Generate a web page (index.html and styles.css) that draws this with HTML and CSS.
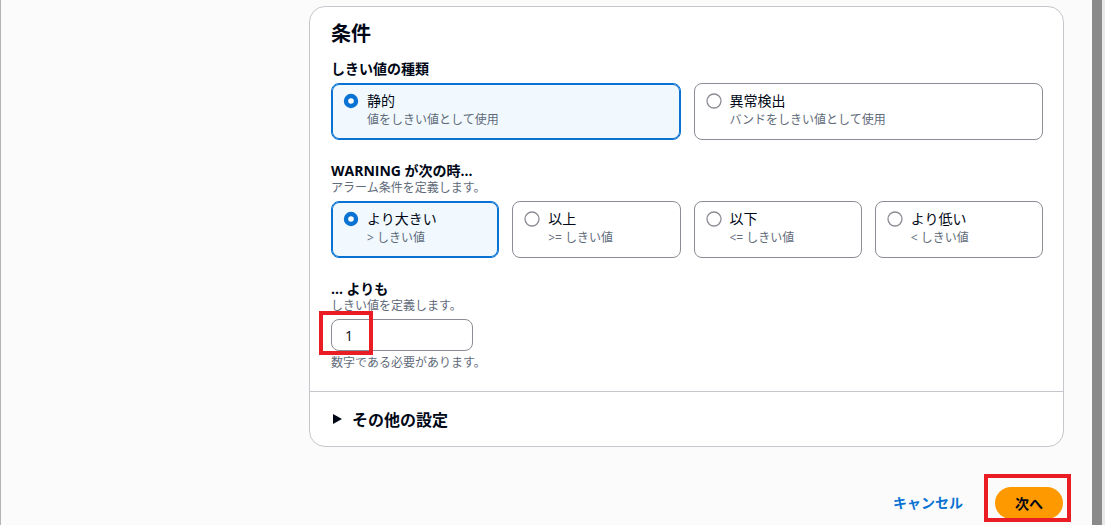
FILE: index.html
```html
<!doctype html>
<html lang="ja">
<head>
    <meta charset="utf-8">
    <meta name="viewport" content="width=device-width, initial-scale=1">
    <title>アラームの作成</title>
    <link rel="stylesheet" href="styles.css">
</head>

<body>
    <div class="edge"></div>

    <main class="page">
        <section class="card">
            <div class="card-body">
                <h2 class="card-title">条件</h2>

                <div class="field">
                    <div class="field-label">しきい値の種類</div>
                    <div class="tiles tiles-2">
                        <div class="tile selected">
                            <svg class="radio" viewBox="0 0 16 16"><circle cx="8" cy="8" r="5" fill="#fff" stroke="#0972d3" stroke-width="4.4" /></svg>
                            <div>
                                <div class="tile-label">静的</div>
                                <div class="tile-desc">値をしきい値として使用</div>
                            </div>
                        </div>
                        <div class="tile">
                            <svg class="radio" viewBox="0 0 16 16"><circle cx="8" cy="8" r="7" fill="#fff" stroke="#8c8c94" stroke-width="1.3" /></svg>
                            <div>
                                <div class="tile-label">異常検出</div>
                                <div class="tile-desc">バンドをしきい値として使用</div>
                            </div>
                        </div>
                    </div>
                </div>

                <div class="field">
                    <div class="field-label">WARNING が次の時...</div>
                    <div class="field-desc">アラーム条件を定義します。</div>
                    <div class="tiles tiles-4">
                        <div class="tile selected">
                            <svg class="radio" viewBox="0 0 16 16"><circle cx="8" cy="8" r="5" fill="#fff" stroke="#0972d3" stroke-width="4.4" /></svg>
                            <div>
                                <div class="tile-label">より大きい</div>
                                <div class="tile-desc">&gt; しきい値</div>
                            </div>
                        </div>
                        <div class="tile">
                            <svg class="radio" viewBox="0 0 16 16"><circle cx="8" cy="8" r="7" fill="#fff" stroke="#8c8c94" stroke-width="1.3" /></svg>
                            <div>
                                <div class="tile-label">以上</div>
                                <div class="tile-desc">&gt;= しきい値</div>
                            </div>
                        </div>
                        <div class="tile">
                            <svg class="radio" viewBox="0 0 16 16"><circle cx="8" cy="8" r="7" fill="#fff" stroke="#8c8c94" stroke-width="1.3" /></svg>
                            <div>
                                <div class="tile-label">以下</div>
                                <div class="tile-desc">&lt;= しきい値</div>
                            </div>
                        </div>
                        <div class="tile">
                            <svg class="radio" viewBox="0 0 16 16"><circle cx="8" cy="8" r="7" fill="#fff" stroke="#8c8c94" stroke-width="1.3" /></svg>
                            <div>
                                <div class="tile-label">より低い</div>
                                <div class="tile-desc">&lt; しきい値</div>
                            </div>
                        </div>
                    </div>
                </div>

                <div class="field">
                    <div class="field-label">... よりも</div>
                    <div class="field-desc">しきい値を定義します。</div>
                    <div class="input-wrap">
                        <input class="input" type="text" value="1">
                        <span class="mark mark-input"></span>
                    </div>
                    <div class="field-hint">数字である必要があります。</div>
                </div>
            </div>

            <div class="card-footer">
                <span class="caret"></span>
                <span>その他の設定</span>
            </div>
        </section>

        <div class="actions">
            <a class="link-btn" href="#">キャンセル</a>
            <div class="primary-wrap">
                <button class="primary-btn">次へ</button>
                <span class="mark mark-btn"></span>
            </div>
        </div>
    </main>

    <div class="scrollbar"><div class="thumb"></div></div>
</body>
</html>
```

FILE: styles.css
```css
*,
*::after,
*::before {
  box-sizing: border-box;
}

body {
  margin: 0;
  height: 525px;
  overflow: hidden;
  display: flex;
  background: #fbfbfb;
  font-family: 'Open Sans', 'Noto Sans CJK JP', sans-serif;
  color: #000716;
}

.edge {
  width: 1px;
  background: #b4b4b4;
  flex-shrink: 0;
}

.page {
  flex: 1;
  padding-left: 308px;
  padding-top: 6px;
}

.card {
  width: 755px;
  background: #fff;
  border: 1px solid #c6c6cd;
  border-radius: 16px;
}

.card-body {
  padding: 13px 20px 20px 21px;
}

.card-title {
  margin: 0 0 12px 0;
  font-size: 20px;
  line-height: 28px;
  font-weight: 700;
}

.field + .field {
  margin-top: 22px;
}

.field-label {
  font-size: 14px;
  line-height: 18px;
  font-weight: 700;
}

.field-desc,
.field-hint {
  font-size: 12px;
  line-height: 16px;
  color: #5f6b7a;
}

.field-hint {
  margin-top: 4px;
}

.tiles {
  display: grid;
  gap: 13px;
  margin-top: 5px;
}

.tiles-2 {
  grid-template-columns: 1fr 1fr;
}

.tiles-4 {
  grid-template-columns: repeat(4, 1fr);
}

.tile {
  display: flex;
  gap: 8px;
  padding: 6px 12px 11px 11px;
  border: 1px solid #8c8c94;
  border-radius: 8px;
  background: #fff;
}

.tile.selected {
  border-color: #0972d3;
  box-shadow: inset 0 0 0 1px #0972d3;
  background: #f1f9fe;
}

.radio {
  width: 16px;
  height: 16px;
  flex-shrink: 0;
  margin-top: 3px;
}

.tile-label {
  font-size: 14px;
  line-height: 22px;
}

.tile-desc {
  font-size: 12px;
  line-height: 16px;
  color: #5f6b7a;
}

.input-wrap {
  position: relative;
  width: 142px;
  margin-top: 5px;
}

.input {
  display: block;
  width: 142px;
  height: 32px;
  padding: 0 13px;
  border: 1px solid #8c8c94;
  border-radius: 8px;
  font-family: 'Open Sans', 'Noto Sans CJK JP', sans-serif;
  font-size: 14px;
  color: #000716;
  background: #fff;
  outline: none;
}

.mark {
  position: absolute;
  border: 4px solid #ea1c24;
  pointer-events: none;
}

.mark-input {
  left: -12px;
  top: -8px;
  width: 54px;
  height: 44px;
}

.card-footer {
  display: flex;
  align-items: center;
  gap: 10px;
  height: 55px;
  padding-left: 23px;
  padding-bottom: 1px;
  border-top: 1px solid #c6c6cd;
  font-size: 16px;
  font-weight: 700;
}

.caret {
  width: 0;
  height: 0;
  border-left: 9px solid #000716;
  border-top: 5px solid transparent;
  border-bottom: 5px solid transparent;
}

.actions {
  display: flex;
  justify-content: flex-end;
  align-items: center;
  gap: 12px;
  width: 755px;
  margin-top: 40px;
  padding-right: 1px;
}

.link-btn {
  padding: 4px 20px;
  font-size: 14px;
  line-height: 22px;
  font-weight: 700;
  color: #0972d3;
  text-decoration: none;
}

.primary-wrap {
  position: relative;
}

.primary-btn {
  display: block;
  height: 32px;
  padding: 0 20px;
  border: none;
  border-radius: 20px;
  background: #ff9900;
  font-family: 'Open Sans', 'Noto Sans CJK JP', sans-serif;
  font-size: 14px;
  font-weight: 700;
  color: #000716;
}

.mark-btn {
  left: -11px;
  top: -13px;
  width: 87px;
  height: 48px;
}

.scrollbar {
  width: 13px;
  flex-shrink: 0;
  background: #e9e9e9;
  padding-right: 3px;
}

.thumb {
  height: 100%;
  background: #8a8a8a;
}
```
